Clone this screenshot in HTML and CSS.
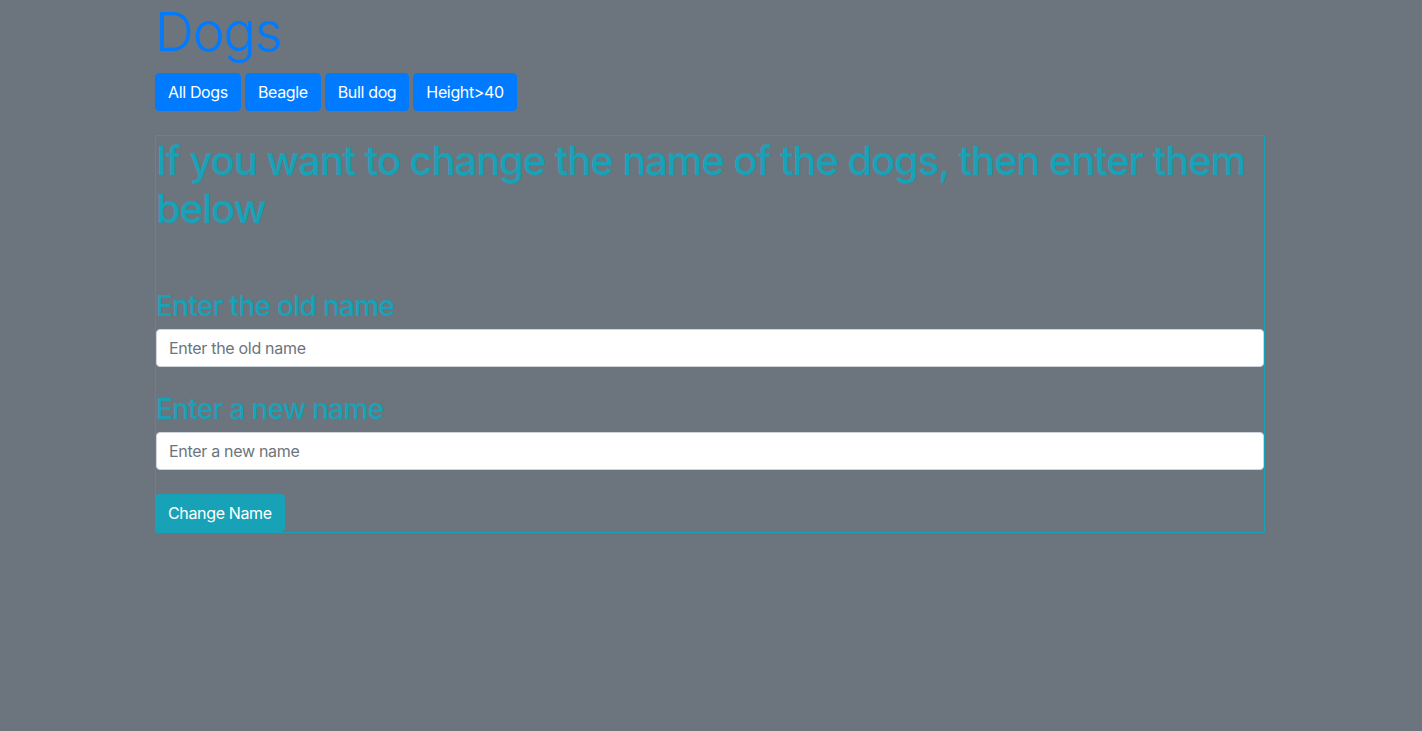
FILE: index.html
```html
<!DOCTYPE html>
<html lang="en">
<head>
<meta charset="utf-8">
<title>Dogs</title>
<link rel="stylesheet" href="styles.css">
</head>
<body>
<div class="container">
  <h1 class="title">Dogs</h1>
  <div class="nav">
    <button class="btn btn-primary">All Dogs</button>
    <button class="btn btn-primary">Beagle</button>
    <button class="btn btn-primary">Bull dog</button>
    <button class="btn btn-primary">Height&gt;40</button>
  </div>
  <div class="panel">
    <h1 class="panel-title">If you want to change the name of the dogs, then enter them below</h1>
    <form class="form">
      <div class="form-group">
        <h3 class="label">Enter the old name</h3>
        <input class="input" type="text" placeholder="Enter the old name">
      </div>
      <div class="form-group">
        <h3 class="label">Enter a new name</h3>
        <input class="input" type="text" placeholder="Enter a new name">
      </div>
      <button type="button" class="btn btn-info">Change Name</button>
    </form>
  </div>
</div>
</body>
</html>
```

FILE: styles.css
```css
* { box-sizing: border-box; }
html, body {
  margin: 0;
  padding: 0;
  background: #6c757d;
  min-height: 731px;
  font-family: Inter, "Noto Sans", "Liberation Sans", sans-serif;
}
.container {
  width: 1110px;
  margin-left: 155px;
}
.title {
  margin: 0 0 9px 0;
  font-size: 54px;
  line-height: 64px;
  font-weight: 300;
  color: #007bff;
  letter-spacing: -1.2px;
}
.nav {
  display: flex;
  gap: 4px;
}
.btn {
  font-family: inherit;
  font-size: 16px;
  line-height: 24px;
  padding: 6px 12px;
  border: 1px solid transparent;
  border-radius: 4px;
  color: #fff;
  cursor: pointer;
  letter-spacing: -0.35px;
}
.btn-primary { background: #007bff; border-color: #007bff; }
.btn-info { background: #17a2b8; border-color: #17a2b8; }
.panel {
  margin-top: 24px;
  border: 1px solid #17a2b8;
  height: 398px;
}
.panel-title {
  margin: 0;
  padding-top: 1px;
  font-size: 40px;
  line-height: 48px;
  font-weight: 500;
  color: #17a2b8;
  letter-spacing: -1.1px;
}
.form { margin-top: 54px; }
.form-group { margin-bottom: 23px; }
.label {
  margin: 0 0 6px 0;
  padding-top: 2px;
  font-size: 28px;
  line-height: 34px;
  font-weight: 500;
  color: #17a2b8;
  letter-spacing: -0.7px;
}
.input {
  display: block;
  width: 100%;
  height: 38px;
  padding: 6px 12px;
  font-family: inherit;
  font-size: 16px;
  color: #495057;
  background: #fff;
  border: 1px solid #ced4da;
  border-radius: 4px;
  letter-spacing: -0.3px;
}
.input::placeholder { color: #6c757d; opacity: 1; }
.form .btn-info { margin-top: 1px; margin-left: -1px; }
```
